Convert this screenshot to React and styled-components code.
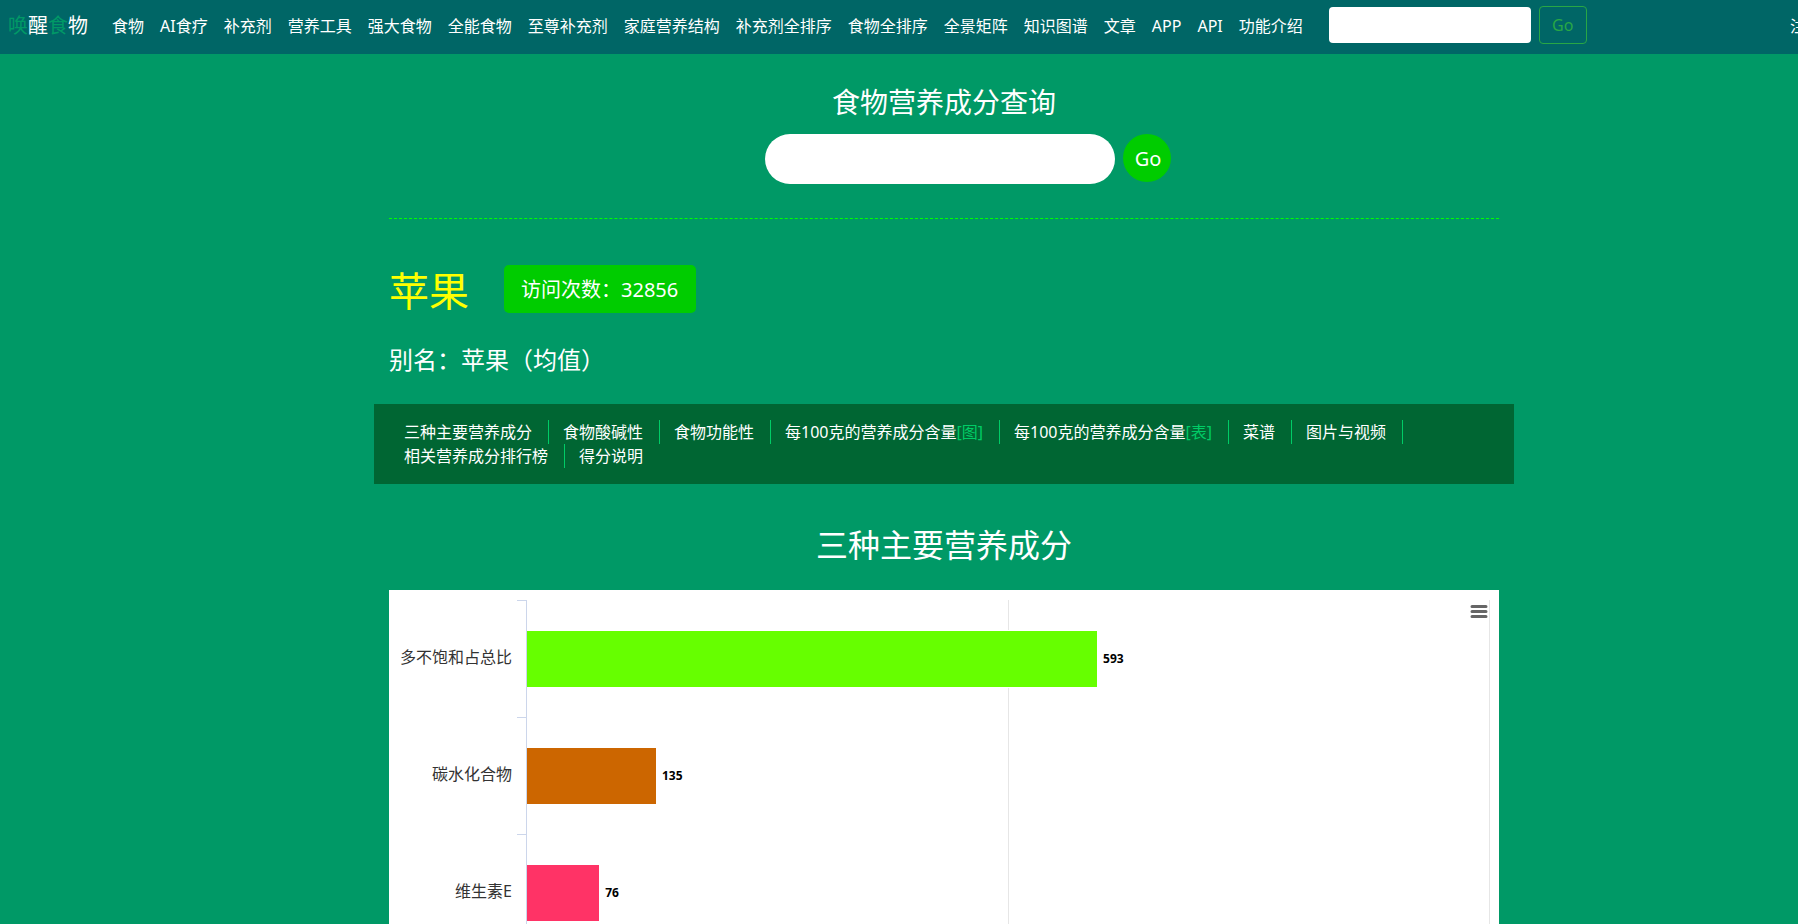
import React, { useState } from 'react';
import styled, { createGlobalStyle } from 'styled-components';

const GlobalStyle = createGlobalStyle`
  * {
    box-sizing: border-box;
  }

  body {
    margin: 0;
    overflow-x: hidden;
    background-color: #009966;
    color: white;
    font-family: 'Noto Sans', 'Noto Sans CJK SC', sans-serif;
    font-size: 16px;
    line-height: 24px;
  }

  body::-webkit-scrollbar {
    display: none;
  }

  a {
    color: inherit;
    text-decoration: none;
  }

  input, button {
    font-family: inherit;
  }
`;

const Page = styled.div`
  width: calc(100vw + 90px);
`;

const Navbar = styled.nav`
  display: flex;
  align-items: center;
  height: 54px;
  padding: 0 10px 2px 8px;
  background-color: #006666;
  white-space: nowrap;
`;

const Brand = styled.a`
  margin-right: 16px;
  font-size: 20px;
`;

const BrandAccent = styled.span`
  color: #009966;
`;

const NavList = styled.ul`
  display: flex;
  margin: 0;
  margin-left: ${(props) => (props.$right ? 'auto' : '0')};
  padding: 0;
  list-style: none;
`;

const NavLink = styled.a`
  padding: 8px;
`;

const NavForm = styled.form`
  display: flex;
  align-items: center;
  gap: 8px;
  margin-left: 18px;
  padding-bottom: 2px;
`;

const NavInput = styled.input`
  width: 202px;
  height: 36px;
  padding: 6px 12px;
  border: none;
  border-radius: 4px;
  font-size: 16px;
`;

const NavButton = styled.button`
  width: 48px;
  height: 38px;
  padding: 0;
  border: 1px solid #28a745;
  border-radius: 4px;
  background-color: transparent;
  color: #28a745;
  font-size: 16px;
  cursor: pointer;
`;

const Container = styled.main`
  width: 1140px;
  margin: 0 auto;
  padding: 0 15px;
`;

const SearchSection = styled.section`
  padding: 28px 0 34px;
  border-bottom: 1px dashed #00ff00;
`;

const SearchTitle = styled.h1`
  margin: 0 0 12px;
  font-size: 28px;
  font-weight: 400;
  line-height: 40px;
  text-align: center;
`;

const SearchForm = styled.form`
  display: flex;
  justify-content: center;
  gap: 8px;
  padding-left: 48px;
`;

const SearchInput = styled.input`
  width: 350px;
  height: 50px;
  padding: 8px 24px;
  border: none;
  border-radius: 25px;
  font-size: 20px;
`;

const SearchButton = styled.button`
  width: 48px;
  height: 48px;
  padding: 0 0 0 2px;
  border: none;
  border-radius: 50%;
  background-color: #00cc00;
  color: white;
  font-size: 20px;
  cursor: pointer;
`;

const FoodHeader = styled.header`
  display: flex;
  align-items: center;
  gap: 35px;
  margin-top: 44px;
`;

const FoodName = styled.h2`
  margin: 0;
  padding-top: 4px;
  color: #ffff00;
  font-size: 40px;
  font-weight: 400;
  line-height: 48px;
`;

const Visits = styled.span`
  padding: 9px 18px 7px 17px;
  border-radius: 5px;
  background-color: #00cc00;
  font-size: 20px;
  line-height: 32px;
`;

const Alias = styled.p`
  margin: 29px 0 28px;
  font-size: 24px;
  line-height: 32px;
`;

const SectionNav = styled.nav`
  display: flex;
  flex-wrap: wrap;
  margin: 0 -15px;
  padding: 16px;
  background-color: #006633;
`;

const SectionLink = styled.a`
  padding: 0 16px 0 14px;
  border-right: 1px solid #00cc66;

  &:last-child {
    border-right: none;
  }
`;

const LinkNote = styled.span`
  color: #00cc66;
`;

const ChartTitle = styled.h3`
  margin: 40px 0 24px;
  font-size: 32px;
  font-weight: 400;
  line-height: 42px;
  text-align: center;
`;

const Chart = styled.div`
  display: flex;
  flex-direction: column;
  position: relative;
  padding: 10px 9px 10px 0;
  background-color: white;
  color: #333333;
`;

const MenuButton = styled.button`
  position: absolute;
  top: 10px;
  right: 9px;
  width: 22px;
  height: 22px;
  padding: 0;
  border: none;
  background-color: transparent;
  cursor: pointer;
`;

const ChartRow = styled.div`
  display: flex;
  height: 117px;
`;

const RowLabel = styled.span`
  display: flex;
  align-items: center;
  justify-content: flex-end;
  width: 123px;
  margin-right: 5px;
  padding-bottom: 4px;
`;

const Tick = styled.span`
  width: 10px;
  border-top: 1px solid #ccd6eb;
  border-right: 1px solid #ccd6eb;
`;

const Plot = styled.div`
  display: flex;
  flex: 1;
  align-items: flex-start;
  padding-top: 30px;
  background:
    linear-gradient(#e6e6e6, #e6e6e6) 50% 0 / 1px 100% no-repeat,
    linear-gradient(#e6e6e6, #e6e6e6) 100% 0 / 1px 100% no-repeat;
`;

const Bar = styled.div`
  height: 58px;
  border: 1px solid white;
  border-left: none;
  background-color: ${(props) => props.$color};
`;

const BarValue = styled.span`
  margin-left: 5px;
  color: black;
  font-size: 12px;
  font-weight: 700;
  line-height: 58px;
`;

const menuItems = [
  '食物', 'AI食疗', '补充剂', '营养工具', '强大食物', '全能食物', '至尊补充剂',
  '家庭营养结构', '补充剂全排序', '食物全排序', '全景矩阵', '知识图谱', '文章',
  'APP', 'API', '功能介绍',
];

const accountItems = ['注册', '登录'];

const sections = [
  { label: '三种主要营养成分' },
  { label: '食物酸碱性' },
  { label: '食物功能性' },
  { label: '每100克的营养成分含量', note: '[图]' },
  { label: '每100克的营养成分含量', note: '[表]' },
  { label: '菜谱' },
  { label: '图片与视频' },
  { label: '相关营养成分排行榜' },
  { label: '得分说明' },
];

const nutrients = [
  { name: '多不饱和占总比', value: 593, color: '#66ff00' },
  { name: '碳水化合物', value: 135, color: '#cc6600' },
  { name: '维生素E', value: 76, color: '#ff3366' },
];

const AXIS_MAX = 1000;

function TopBar() {
  const [keyword, setKeyword] = useState('');

  return (
    <Navbar>
      <Brand href="#">
        <BrandAccent>唤</BrandAccent>醒<BrandAccent>食</BrandAccent>物
      </Brand>
      <NavList>
        {menuItems.map((item) => (
          <li key={item}><NavLink href="#">{item}</NavLink></li>
        ))}
      </NavList>
      <NavForm onSubmit={(e) => e.preventDefault()}>
        <NavInput
          type="text"
          aria-label="搜索"
          value={keyword}
          onChange={(e) => setKeyword(e.target.value)}
        />
        <NavButton type="submit">Go</NavButton>
      </NavForm>
      <NavList $right>
        {accountItems.map((item) => (
          <li key={item}><NavLink href="#">{item}</NavLink></li>
        ))}
      </NavList>
    </Navbar>
  );
}

function FoodSearch() {
  const [food, setFood] = useState('');

  return (
    <SearchSection>
      <SearchTitle id="search-title">食物营养成分查询</SearchTitle>
      <SearchForm onSubmit={(e) => e.preventDefault()}>
        <SearchInput
          type="text"
          aria-labelledby="search-title"
          value={food}
          onChange={(e) => setFood(e.target.value)}
        />
        <SearchButton type="submit">Go</SearchButton>
      </SearchForm>
    </SearchSection>
  );
}

function NutrientChart() {
  return (
    <Chart>
      {nutrients.map((nutrient) => (
        <ChartRow key={nutrient.name}>
          <RowLabel>{nutrient.name}</RowLabel>
          <Tick />
          <Plot>
            <Bar
              $color={nutrient.color}
              style={{ width: `${(nutrient.value / AXIS_MAX) * 100}%` }}
            />
            <BarValue>{nutrient.value}</BarValue>
          </Plot>
        </ChartRow>
      ))}
      <MenuButton type="button" aria-label="图表菜单">
        <svg width="22" height="22" viewBox="0 0 22 22" stroke="#666666" strokeWidth="3" strokeLinecap="round">
          <path d="M4 6.5h14M4 11.5h14M4 16.5h14" />
        </svg>
      </MenuButton>
    </Chart>
  );
}

function App() {
  return (
    <Page>
      <GlobalStyle />
      <TopBar />
      <Container>
        <FoodSearch />
        <FoodHeader>
          <FoodName>苹果</FoodName>
          <Visits>访问次数：32856</Visits>
        </FoodHeader>
        <Alias>别名：苹果（均值）</Alias>
        <SectionNav>
          {sections.map((section) => (
            <SectionLink key={section.label + section.note} href="#">
              {section.label}
              {section.note && <LinkNote>{section.note}</LinkNote>}
            </SectionLink>
          ))}
        </SectionNav>
        <ChartTitle>三种主要营养成分</ChartTitle>
        <NutrientChart />
      </Container>
    </Page>
  );
}

export default App;
